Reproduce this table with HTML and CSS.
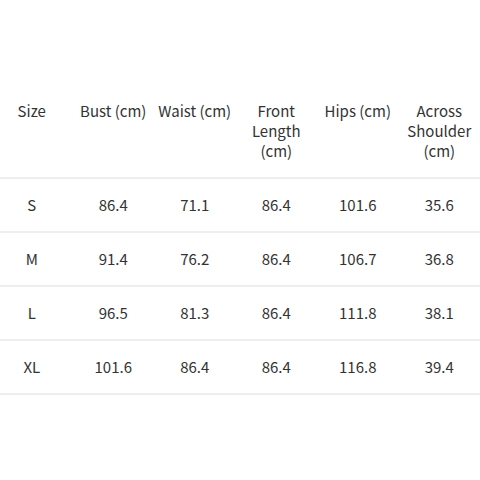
FILE: index.html
```html
<!DOCTYPE html>
<html>
<head>
<meta charset="utf-8">
<link rel="stylesheet" href="styles.css">
</head>
<body>
<div class="page">
<table class="size-table">
<thead>
<tr><th>Size</th><th>Bust (cm)</th><th>Waist (cm)</th><th>Front Length (cm)</th><th>Hips (cm)</th><th>Across Shoulder (cm)</th></tr>
</thead>
<tbody>
<tr><td>S</td><td>86.4</td><td>71.1</td><td>86.4</td><td>101.6</td><td>35.6</td></tr>
<tr><td>M</td><td>91.4</td><td>76.2</td><td>86.4</td><td>106.7</td><td>36.8</td></tr>
<tr><td>L</td><td>96.5</td><td>81.3</td><td>86.4</td><td>111.8</td><td>38.1</td></tr>
<tr><td>XL</td><td>101.6</td><td>86.4</td><td>86.4</td><td>116.8</td><td>39.4</td></tr>
</tbody>
</table>
</div>
</body>
</html>
```
FILE: styles.css
```css
html, body { margin: 0; padding: 0; background: #fff; overflow: hidden; }
.page {
  width: 480px;
  height: 480px;
  display: flex;
  align-items: center;
}
.size-table {
  flex: none;
  width: 489px;
  margin-left: -9px;
  table-layout: fixed;
  border-collapse: collapse;
  font-family: "Noto Sans CJK SC", "Noto Sans", sans-serif;
  font-size: 15px;
  color: #333;
}
.size-table th, .size-table td {
  font-weight: normal;
  text-align: center;
  vertical-align: top;
  padding: 16px 3px;
  line-height: 20px;
  border-bottom: 2px solid #eeeeee;
}
```
